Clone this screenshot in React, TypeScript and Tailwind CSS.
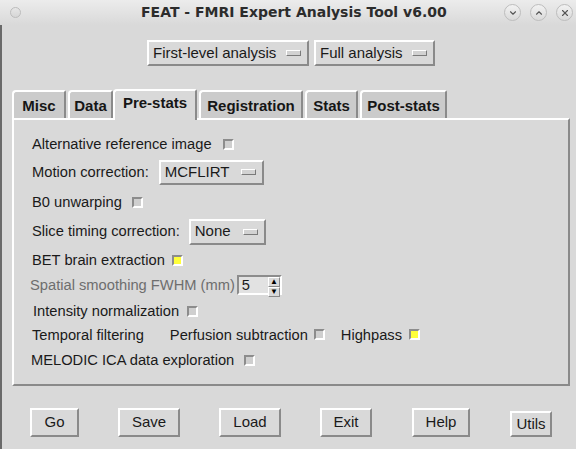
import { ChevronDown, ChevronUp, X } from 'lucide-react'

const font = "font-['Liberation_Sans',Arial,sans-serif]"

function MenuButton({ label, size }: { label: string; size: string }) {
  return (
    <div className={`${size} flex items-center justify-between border-2 border-t-white border-l-white border-r-[#8a8a8a] border-b-[#8a8a8a] bg-[#d9d9d9] pl-[4px] pr-[6px] text-[15px] text-[#1a1a1a]`}>
      <span>{label}</span>
      <span className="w-[15px] h-[6px] border border-t-white border-l-white border-r-[#7a7a7a] border-b-[#7a7a7a] bg-[#d2d2d2]" />
    </div>
  )
}

function Check({ on = false }: { on?: boolean }) {
  return (
    <span
      className={`inline-block w-[11px] h-[11px] border-2 border-t-[#8c8c8c] border-l-[#8c8c8c] border-r-white border-b-white ${
        on ? 'bg-[#ffff3a]' : 'bg-[#cfcfcf]'
      }`}
    />
  )
}

function Tab({ label, active = false, size }: { label: string; active?: boolean; size: string }) {
  return (
    <div
      className={`${size} flex items-center justify-center rounded-tl-[4px] rounded-tr-[2px] border-l-2 border-t-2 border-r-2 border-l-white border-t-white border-r-[#8a8a8a] font-bold text-[15px] text-[#161616] ${
        active ? 'relative z-10 bg-[#d9d9d9] -mb-[2px] pb-[4px]' : 'bg-[#cbcbcb] pt-[2px]'
      }`}
    >
      {label}
    </div>
  )
}

function Button({ label, size }: { label: string; size: string }) {
  return (
    <div className={`${size} flex items-center justify-center border-2 border-t-white border-l-white border-r-[#8a8a8a] border-b-[#8a8a8a] bg-[#d9d9d9] text-[15px] text-[#1a1a1a]`}>
      {label}
    </div>
  )
}

export default function App() {
  return (
    <div className={`w-[576px] h-[449px] overflow-hidden bg-[#d9d9d9] ${font}`}>
      {/* Title bar */}
      <div className="h-[25px] flex items-center bg-gradient-to-b from-[#ececec] to-[#d9d9d9]">
        <span className="ml-[10px] w-[11px] h-[11px] rounded-full border border-[#bcbcbc] bg-gradient-to-b from-[#e6e6e6] to-[#d6d6d6]" />
        <span className="ml-[120px] font-['DejaVu_Sans',sans-serif] font-bold text-[14px] text-[#2c2c2c]">
          FEAT - FMRI Expert Analysis Tool v6.00
        </span>
        <div className="ml-auto mr-[3px] flex gap-[9px]">
          {[ChevronDown, ChevronUp, X].map((Icon, i) => (
            <span key={i} className="w-[17px] h-[17px] rounded-full border border-[#bdbdbd] bg-gradient-to-b from-[#f2f2f2] to-[#dadada] flex items-center justify-center">
              <Icon size={10} strokeWidth={2.6} className="text-[#555]" />
            </span>
          ))}
        </div>
      </div>

      {/* body with left window edge */}
      <div className="h-[424px] border-l-2 border-l-[#6a6a6a]">
        {/* analysis selectors */}
        <div className="pt-[15px] pl-[145px] flex gap-[5px]">
          <MenuButton label="First-level analysis" size="w-[162px] h-[26px]" />
          <MenuButton label="Full analysis" size="w-[121px] h-[26px]" />
        </div>

        {/* tabs */}
        <div className="mt-[23px] ml-[10px] h-[29px] flex items-end">
          <Tab label="Misc" size="w-[54px] h-[28px] mr-[2px]" />
          <Tab label="Data" size="w-[45px] h-[28px]" />
          <Tab label="Pre-stats" active size="w-[84px] h-[31px] mr-[2px]" />
          <Tab label="Registration" size="w-[104px] h-[28px] mr-[2px]" />
          <Tab label="Stats" size="w-[53px] h-[28px] mr-[2px]" />
          <Tab label="Post-stats" size="w-[87px] h-[28px]" />
        </div>

        {/* panel */}
        <div className="ml-[10px] w-[558px] h-[268px] border-2 border-t-white border-l-white border-r-[#8a8a8a] border-b-[#8a8a8a] pt-[10px] pl-[18px] text-[14.7px] text-[#1a1a1a]">
          <div className="h-[28px] flex items-center gap-[11px]">
            <span>Alternative reference image</span>
            <Check />
          </div>
          <div className="h-[28px] flex items-center gap-[10px]">
            <span>Motion correction:</span>
            <MenuButton label="MCFLIRT" size="w-[105px] h-[25px]" />
          </div>
          <div className="h-[32px] flex items-center gap-[10px]">
            <span>B0 unwarping</span>
            <Check />
          </div>
          <div className="h-[27px] flex items-center gap-[9px]">
            <span>Slice timing correction:</span>
            <MenuButton label="None" size="w-[77px] h-[26px]" />
          </div>
          <div className="h-[30px] flex items-center gap-[7px]">
            <span>BET brain extraction</span>
            <Check on />
          </div>
          <div className="h-[20px] flex items-center gap-[2px] -ml-[2px]">
            <span className="text-[#6e6e6e]">Spatial smoothing FWHM (mm)</span>
            <div className="w-[45px] h-[20px] flex border-2 border-t-[#8c8c8c] border-l-[#8c8c8c] border-r-white border-b-white bg-[#e2e2e2]">
              <span className="flex-1 pl-[3px] leading-[16px]">5</span>
              <div className="w-[12px] flex flex-col">
                <span className="flex-1 flex items-center justify-center border border-t-white border-l-white border-r-[#888] border-b-[#888] bg-[#d9d9d9] text-[8px] leading-none text-black">▲</span>
                <span className="flex-1 flex items-center justify-center border border-t-white border-l-white border-r-[#888] border-b-[#888] bg-[#d9d9d9] text-[8px] leading-none text-black">▼</span>
              </div>
            </div>
          </div>
          <div className="h-[32px] flex items-center gap-[8px] ml-[1px]">
            <span>Intensity normalization</span>
            <Check />
          </div>
          <div className="h-[16px] flex items-center">
            <span>Temporal filtering</span>
            <span className="ml-[26px]">Perfusion subtraction</span>
            <span className="ml-[6px]"><Check /></span>
            <span className="ml-[16px]">Highpass</span>
            <span className="ml-[7px]"><Check on /></span>
          </div>
          <div className="h-[34px] flex items-center gap-[10px] -ml-[1px]">
            <span>MELODIC ICA data exploration</span>
            <Check />
          </div>
        </div>

        {/* buttons */}
        <div className="mt-[22px] ml-[28px] flex items-end gap-[39px]">
          <Button label="Go" size="w-[49px] h-[29px]" />
          <Button label="Save" size="w-[62px] h-[29px]" />
          <Button label="Load" size="w-[62px] h-[29px]" />
          <Button label="Exit" size="w-[52px] h-[29px]" />
          <Button label="Help" size="w-[58px] h-[29px] ml-[1px]" />
          <Button label="Utils" size="w-[42px] h-[26px] ml-[1px]" />
        </div>
      </div>
    </div>
  )
}
